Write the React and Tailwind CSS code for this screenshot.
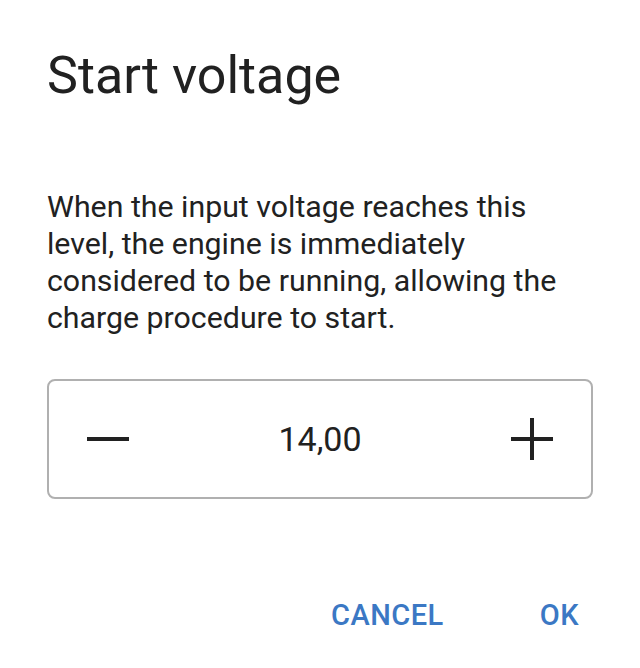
import { useState } from "react";

function App() {
  const [value, setValue] = useState(14);

  return (
    <div
      className="w-[640px] h-[668px] bg-white flex flex-col px-[47px] text-[#212121]"
      style={{ fontFamily: "Roboto, 'Noto Sans', sans-serif" }}
    >
      <h1 className="mt-[44px] text-[52px] leading-[64px] font-normal">
        Start voltage
      </h1>

      <p className="mt-[80px] text-[30.3px] leading-[37px] pr-[16px]">
        When the input voltage reaches this level, the engine is immediately
        considered to be running, allowing the charge procedure to start.
      </p>

      {/* Stepper */}
      <div className="mt-[43px] h-[120px] border-2 border-[#b0b0b0] rounded-[8px] flex items-center justify-between px-[37px]">
        <button
          onClick={() => setValue((v) => v - 0.1)}
          className="w-[44px] h-[44px] flex items-center justify-center"
        >
          <svg width="42" height="42" viewBox="0 0 42 42">
            <path d="M0 21h42" stroke="#212121" strokeWidth="4" />
          </svg>
        </button>
        <span className="text-[34px]">{value.toFixed(2).replace(".", ",")}</span>
        <button
          onClick={() => setValue((v) => v + 0.1)}
          className="w-[44px] h-[44px] flex items-center justify-center"
        >
          <svg width="42" height="42" viewBox="0 0 42 42">
            <path d="M0 21h42M21 0v42" stroke="#212121" strokeWidth="4" />
          </svg>
        </button>
      </div>

      <div className="mt-[95px] flex justify-end items-center gap-[96px] pr-[14px] text-[29px] font-medium text-[#3b78c4] tracking-[0.5px]">
        <button>CANCEL</button>
        <button>OK</button>
      </div>
    </div>
  );
}

export default App;
